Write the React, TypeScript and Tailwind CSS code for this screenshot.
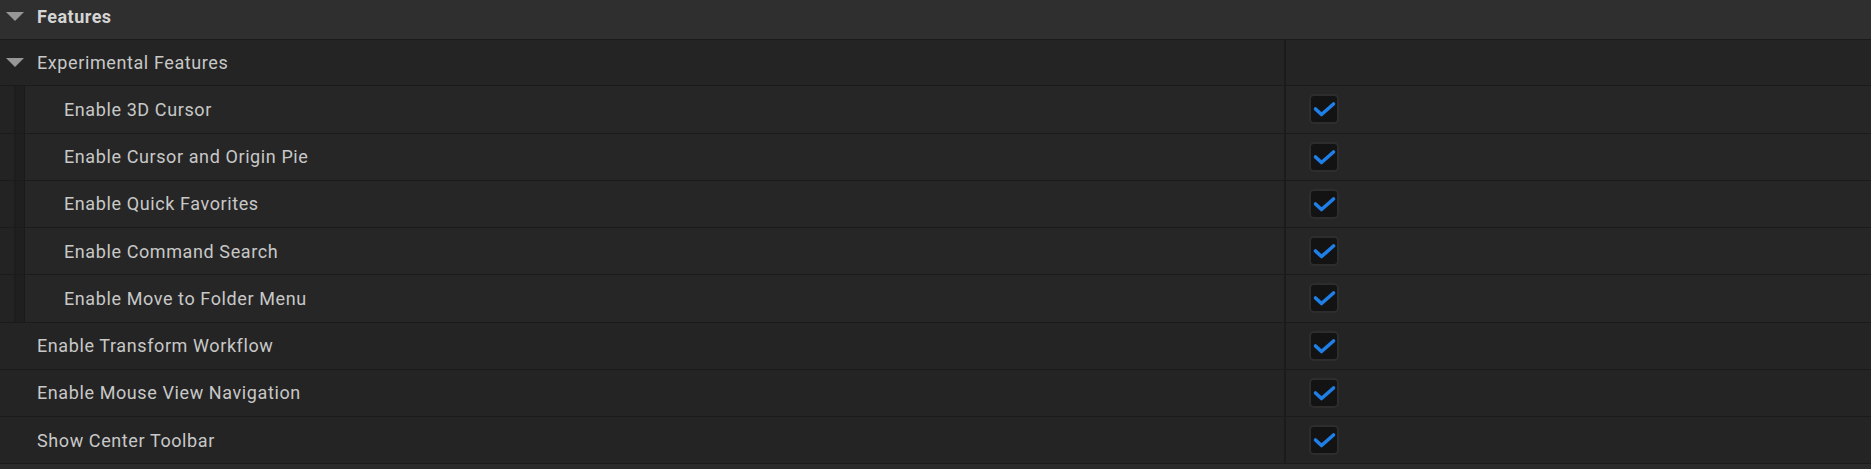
import React from "react";

const sub = [
  "Enable 3D Cursor",
  "Enable Cursor and Origin Pie",
  "Enable Quick Favorites",
  "Enable Command Search",
  "Enable Move to Folder Menu",
];

const top = ["Enable Transform Workflow", "Enable Mouse View Navigation", "Show Center Toolbar"];

const Caret = () => (
  <svg width="18" height="9" viewBox="0 0 18 9" className="shrink-0">
    <path d="M0 0 H18 L9 9 Z" fill="#979797" />
  </svg>
);

const Check = () => (
  <div className="w-[30px] h-[30px] rounded-[5px] border-2 border-[#2d2d2d] bg-[#131313] flex items-center justify-center">
    <svg width="30" height="30" viewBox="0 0 30 30" className="-m-[2px]">
      <path
        d="M6.5 15 L12.5 20.5 L24.5 10"
        fill="none"
        stroke="#1f7fe6"
        strokeWidth="3.6"
        strokeLinecap="round"
        strokeLinejoin="round"
      />
    </svg>
  </div>
);

const Row = ({ label, indent, bg }: { label: string; indent?: boolean; bg: string }) => (
  <div className={`flex h-[47.25px] border-b border-[#1b1b1b] ${bg}`}>
    <div className="flex w-[1284px] shrink-0">
      {indent && (
        <>
          <div className="w-[14px] bg-[#232323]" />
          <div className="w-[2px] bg-[#1d1d1d]" />
          <div className="w-[8px] bg-[#1f1f1f]" />
          <div className="w-px bg-[#1a1a1a]" />
        </>
      )}
      <div
        className={`flex items-center text-[18px] tracking-[0.6px] text-[#c8c8c8] ${indent ? "pl-[39px]" : "pl-[37px]"}`}
      >
        {label}
      </div>
    </div>
    <div className="w-[2px] bg-[#1b1b1b]" />
    <div className="flex flex-1 items-center pl-[23px]">
      <Check />
    </div>
  </div>
);

export default function App() {
  return (
    <div
      className="w-full h-[469px] bg-[#2a2a2a] overflow-hidden"
      style={{ fontFamily: "Roboto, 'Liberation Sans', sans-serif" }}
    >
      <div className="flex items-center h-[40px] bg-[#2f2f2f] border-b border-[#1b1b1b] pl-[6px] pb-[7px] gap-[13px]">
        <Caret />
        <span className="text-[18px] font-bold tracking-[0.5px] text-[#d4d4d4]">Features</span>
      </div>
      <div className="flex h-[46.25px] border-b border-[#1b1b1b] bg-[#242424]">
        <div className="flex w-[1284px] shrink-0 items-center pl-[6px] gap-[13px]">
          <Caret />
          <span className="text-[18px] tracking-[0.6px] text-[#c8c8c8]">Experimental Features</span>
        </div>
        <div className="w-[2px] bg-[#1b1b1b]" />
        <div className="flex-1" />
      </div>
      {sub.map((s) => (
        <Row key={s} label={s} indent bg="bg-[#262626]" />
      ))}
      {top.map((s) => (
        <Row key={s} label={s} bg="bg-[#242424]" />
      ))}
    </div>
  );
}
